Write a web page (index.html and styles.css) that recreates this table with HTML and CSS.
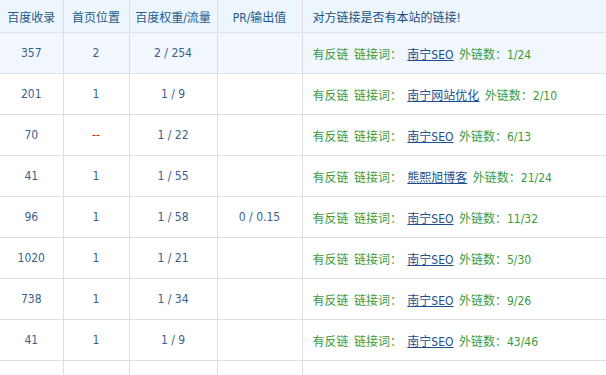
FILE: index.html
```html
<!DOCTYPE html>
<html>
<head>
<meta charset="utf-8">
<link rel="stylesheet" href="styles.css">
</head>
<body>
<table class="links">
  <colgroup>
    <col class="c1"><col class="c2"><col class="c3"><col class="c4"><col class="c5">
  </colgroup>
  <thead>
    <tr><th>百度收录</th><th>首页位置</th><th>百度权重/流量</th><th>PR/输出值</th><th class="left">对方链接是否有本站的链接!</th></tr>
  </thead>
  <tbody>
    <tr class="hl"><td>357</td><td>2</td><td>2 / 254</td><td></td><td class="left ok">有反链 链接词： <a href="#">南宁SEO</a> 外链数：1/24</td></tr>
    <tr><td>201</td><td>1</td><td>1 / 9</td><td></td><td class="left ok">有反链 链接词： <a href="#">南宁网站优化</a> 外链数：2/10</td></tr>
    <tr><td>70</td><td class="na"><span class="dash">--</span></td><td>1 / 22</td><td></td><td class="left ok">有反链 链接词： <a href="#">南宁SEO</a> 外链数：6/13</td></tr>
    <tr><td>41</td><td>1</td><td>1 / 55</td><td></td><td class="left ok">有反链 链接词： <a href="#">熊熙旭博客</a> 外链数：21/24</td></tr>
    <tr><td>96</td><td>1</td><td>1 / 58</td><td>0 / 0.15</td><td class="left ok">有反链 链接词： <a href="#">南宁SEO</a> 外链数：11/32</td></tr>
    <tr><td>1020</td><td>1</td><td>1 / 21</td><td></td><td class="left ok">有反链 链接词： <a href="#">南宁SEO</a> 外链数：5/30</td></tr>
    <tr><td>738</td><td>1</td><td>1 / 34</td><td></td><td class="left ok">有反链 链接词： <a href="#">南宁SEO</a> 外链数：9/26</td></tr>
    <tr><td>41</td><td>1</td><td>1 / 9</td><td></td><td class="left ok">有反链 链接词： <a href="#">南宁SEO</a> 外链数：43/46</td></tr>
    <tr><td></td><td></td><td></td><td></td><td class="left"></td></tr>
  </tbody>
</table>
</body>
</html>
```

FILE: styles.css
```css
html, body {
  margin: 0;
  padding: 0;
  background: #ffffff;
  overflow: hidden;
}
body {
  font-family: "DejaVu Sans Condensed", "Noto Sans CJK SC", sans-serif;
  font-size: 12px;
}
.links {
  border-collapse: collapse;
  table-layout: fixed;
  width: 706px;
}
.c1 { width: 63px; }
.c2 { width: 66px; }
.c3 { width: 88px; }
.c4 { width: 85px; }
.c5 { width: 404px; }
.links th, .links td {
  border: 1px solid #dedede;
  text-align: center;
  padding: 0;
  white-space: nowrap;
  overflow: hidden;
}
.links th:first-child, .links td:first-child { border-left: none; }
.links tr:first-child th { border-top: none; }
.links th {
  height: 32px;
  font-weight: normal;
  color: #1d5a8c;
  background: #edf5fd;
  border-bottom-color: #dbe4ec;
}
.links td {
  height: 40px;
  color: #3a5f8c;
}
.links .left {
  text-align: left;
  padding-left: 10px;
}
.links th.left { color: #1d4f7c; }
.links td.ok { word-spacing: 2px; }
.links tr.hl td { background: #f1f7fd; border-bottom-color: #dbe3ea; }
.links td.ok { color: #3c9a3c; }
.links td.ok a { color: #1e4f8c; text-decoration: underline; word-spacing: 0; }
.links td.na .dash { color: #e01010; }
```
